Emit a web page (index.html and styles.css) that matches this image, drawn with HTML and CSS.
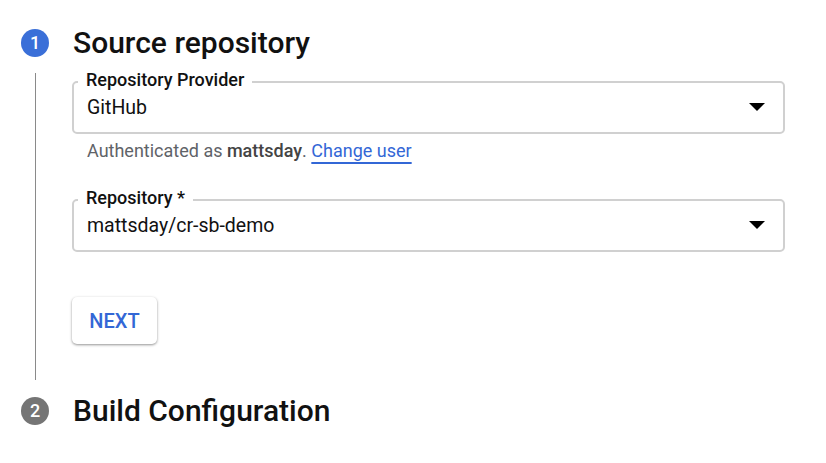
FILE: index.html
```html
<!DOCTYPE html>
<html lang="en">
<head>
<meta charset="utf-8">
<title>Source repository</title>
<link rel="stylesheet" href="styles.css">
</head>
<body>
<main class="stepper">
  <section class="step">
    <header class="step-header">
      <span class="step-num active">1</span>
      <h2 class="step-title">Source repository</h2>
    </header>
    <div class="step-body">
      <fieldset class="field">
        <legend class="field-label">Repository Provider</legend>
        <div class="field-row">
          <span class="field-value">GitHub</span>
          <span class="select-arrow"></span>
        </div>
      </fieldset>
      <p class="helper">Authenticated as <b class="user">mattsday</b>. <a class="link" href="#">Change user</a></p>
      <fieldset class="field field-second">
        <legend class="field-label">Repository *</legend>
        <div class="field-row">
          <span class="field-value">mattsday/cr-sb-demo</span>
          <span class="select-arrow"></span>
        </div>
      </fieldset>
      <button class="btn-next" type="button">NEXT</button>
    </div>
  </section>
  <section class="step step-two">
    <header class="step-header">
      <span class="step-num inactive">2</span>
      <h2 class="step-title">Build Configuration</h2>
    </header>
  </section>
</main>
</body>
</html>
```
FILE: styles.css
```css
* { box-sizing: border-box; }
html, body { margin: 0; padding: 0; background: #fff; }
body {
  font-family: Roboto, "Noto Sans", "Liberation Sans", sans-serif;
  color: #202124;
}
.stepper {
  padding: 27px 41px 0 21px;
}
.step-header {
  display: flex;
  align-items: center;
  gap: 24px;
  height: 32px;
}
.step-num {
  flex: none;
  width: 28px;
  height: 28px;
  border-radius: 50%;
  color: #fff;
  font-size: 18px;
  font-weight: 500;
  display: flex;
  align-items: center;
  justify-content: center;
  line-height: 1;
}
.step-num.active { background: #3a6fd8; }
.step-num.inactive { background: #757575; }
.step-title {
  margin: 0;
  font-size: 30px;
  font-weight: 500;
  color: #111;
  line-height: 32px;
}
.step-body {
  margin: 14px 0 0 14px;
  border-left: 1px solid #8a8a8a;
  padding: 1px 0 36px 36px;
}
.field {
  margin: -3px 0 0;
  border: 2px solid #d0d0d0;
  border-radius: 5px;
  padding: 0 18px 10px 13px;
  min-width: 0;
}
.field-label {
  margin-left: -9px;
  padding: 0 8px 3px;
  font-size: 18px;
  font-weight: 500;
  line-height: 18px;
  color: #111;
}
.field-row {
  height: 30px;
  display: flex;
  align-items: center;
  justify-content: space-between;
}
.field-value {
  font-size: 19.5px;
  color: #111;
}
.select-arrow {
  width: 0;
  height: 0;
  border-left: 8px solid transparent;
  border-right: 8px solid transparent;
  border-top: 8px solid #000;
}
.helper {
  margin: 6px 0 0 15px;
  font-size: 18px;
  line-height: 22px;
  color: #5f6368;
}
.user { font-weight: 500; color: #444; }
.link {
  color: #3367d6;
  text-decoration: underline;
  text-decoration-thickness: 2px;
  text-underline-offset: 5px;
}
.field-second { margin-top: 27px; }
.btn-next {
  display: block;
  margin-top: 45px;
  width: 85px;
  height: 47px;
  border: none;
  border-radius: 5px;
  background: #fff;
  box-shadow: 0 1px 3px rgba(0,0,0,0.3), 0 1px 2px rgba(0,0,0,0.15);
  font-family: inherit;
  font-size: 20px;
  font-weight: 500;
  color: #3367d6;
  padding: 0;
}
.step-two { margin-top: 15px; }
```
